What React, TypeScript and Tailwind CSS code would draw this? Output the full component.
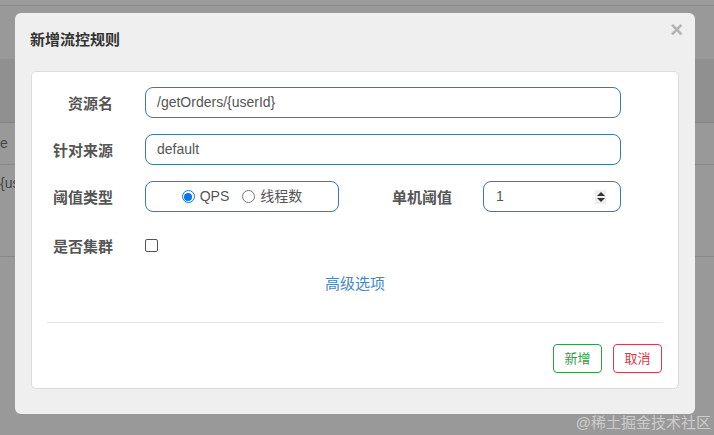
import { useState } from "react";

const cn = '"Liberation Sans", "Noto Sans CJK SC", Arial, sans-serif';

function FieldLabel({ text, className = "" }: { text: string; className?: string }) {
  return (
    <span
      className={`shrink-0 pt-[4px] text-right text-[15px] font-bold text-[#555] ${className}`}
      style={{ fontFamily: cn }}
    >
      {text}
    </span>
  );
}

function Radio({ checked, label }: { checked: boolean; label: string }) {
  return (
    <label className="flex items-center gap-[5px]">
      <span
        className={`flex h-[13px] w-[13px] items-center justify-center rounded-full border ${
          checked ? "border-[#0b75e6] bg-white" : "border-[#767676] bg-white"
        }`}
      >
        {checked && <span className="h-[8px] w-[8px] rounded-full bg-[#0b75e6]" />}
      </span>
      <span className="text-[14px] text-[#555]">{label}</span>
    </label>
  );
}

export default function App() {
  const [mode, setMode] = useState("QPS");

  return (
    <div
      className="relative h-[435px] w-[714px] overflow-hidden bg-[#999]"
      style={{ fontFamily: cn }}
    >
      {/* page behind the dim layer */}
      <div className="flex flex-col">
        <div className="h-[6px] border-b border-[#8c8c8c] bg-[#9b9b9b]" />
        <div className="h-[53px]" />
        <div className="h-[64px] border-b border-[#858585] bg-[#909090]" />
        <div className="flex h-[42px] items-center border-b border-[#888] text-[14px] text-[#444]">
          e
        </div>
        <div className="h-[92px] border-b border-[#888] pt-[8px] text-[14px] text-[#444]">
          {"{us"}
        </div>
      </div>

      {/* modal */}
      <div className="absolute left-[15px] top-[13px] h-[401px] w-[680px] rounded-[6px] bg-[#efefef]">
        <button className="absolute right-[12px] top-[6px] text-[22px] font-bold leading-[22px] text-[#b3b3b3]">
          ×
        </button>

        <h4 className="pl-[15px] pt-[18px] text-[15px] font-bold leading-[18px] text-[#333]">
          新增流控规则
        </h4>

        <div className="mx-[16px] mt-[22px] h-[318px] rounded-[5px] border border-[#dcdcdc] bg-white">
          <div className="flex flex-col gap-[16px] pt-[15px]">
            <div className="flex items-center gap-[32px]">
              <FieldLabel text="资源名" className="w-[81px]" />
              <div className="flex h-[31px] w-[476px] items-center rounded-[8px] border border-[#3b79ad] px-[11px] text-[14px] text-[#555]">
                /getOrders/{"{userId}"}
              </div>
            </div>

            <div className="flex items-center gap-[32px]">
              <FieldLabel text="针对来源" className="w-[81px]" />
              <div className="flex h-[31px] w-[476px] items-center rounded-[8px] border border-[#3b79ad] px-[11px] text-[14px] text-[#555]">
                default
              </div>
            </div>

            <div className="flex items-center">
              <FieldLabel text="阈值类型" className="w-[81px]" />
              <div className="ml-[32px] flex h-[31px] w-[194px] items-center justify-center gap-[13px] rounded-[8px] border border-[#3b79ad]">
                <span onClick={() => setMode("QPS")}>
                  <Radio checked={mode === "QPS"} label="QPS" />
                </span>
                <span onClick={() => setMode("thread")}>
                  <Radio checked={mode === "thread"} label="线程数" />
                </span>
              </div>
              <FieldLabel text="单机阈值" className="w-[113px]" />
              <div className="ml-[31px] flex h-[31px] w-[138px] items-center justify-between rounded-[8px] border border-[#3b79ad] pl-[12px] pr-[14px] text-[14px] text-[#555]">
                <span>1</span>
                <span className="flex h-[14px] w-[11px] flex-col items-center justify-center gap-[2px] bg-[#eee]">
                  <span className="h-0 w-0 border-x-[4px] border-b-[4px] border-x-transparent border-b-[#333]" />
                  <span className="h-0 w-0 border-x-[4px] border-t-[4px] border-x-transparent border-t-[#333]" />
                </span>
              </div>
            </div>

            <div className="flex h-[31px] items-center gap-[32px] pt-[3px]">
              <FieldLabel text="是否集群" className="w-[81px]" />
              <span className="h-[13px] w-[13px] rounded-[2px] border border-[#555] bg-white" />
            </div>
          </div>

          <div className="mt-[15px] text-center text-[15px] leading-[20px] text-[#4a85c4]">
            高级选项
          </div>

          <div className="mx-[15px] mt-[28px] border-t border-[#e5e5e5]" />

          <div className="flex justify-end gap-[11px] pr-[16px] pt-[21px]">
            <button className="h-[29px] w-[49px] rounded-[4px] border border-[#2e9e46] text-[13px] text-[#2e9e46]">
              新增
            </button>
            <button className="h-[29px] w-[49px] rounded-[4px] border border-[#d6394b] text-[13px] text-[#d6394b]">
              取消
            </button>
          </div>
        </div>
      </div>

      <div className="absolute bottom-[1px] right-[3px] text-[15px] text-white/50">
        @稀土掘金技术社区
      </div>
    </div>
  );
}
